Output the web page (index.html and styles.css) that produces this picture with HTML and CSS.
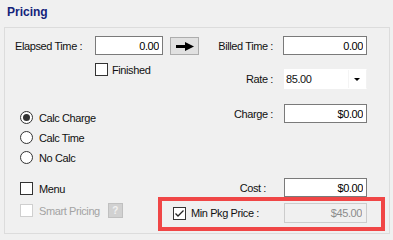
FILE: index.html
```html
<!DOCTYPE html>
<html lang="en">
<head>
  <meta charset="UTF-8" />
  <title>Pricing</title>
  <link rel="stylesheet" href="styles.css">
</head>
<body>
  <div class="panel">
    <div class="title">Pricing</div>
    <div class="group">
      <div class="cols">
        <div class="left">
          <div class="row">
            <span class="lbl-l">Elapsed Time :</span>
            <input class="num" type="text" value="0.00" />
            <button class="go">
              <svg width="18" height="9" viewBox="0 0 18 9"><rect x="0" y="3" width="11" height="3" fill="#000"/><polygon points="9,0 18,4.5 9,9" fill="#000"/></svg>
            </button>
          </div>
          <div class="check finished"><span class="box"></span>Finished</div>
          <div class="radios">
            <div class="radio on"><span class="ring"></span>Calc Charge</div>
            <div class="radio"><span class="ring"></span>Calc Time</div>
            <div class="radio"><span class="ring"></span>No Calc</div>
          </div>
          <div class="check menu"><span class="box"></span>Menu</div>
        </div>
        <div class="right">
          <div class="row">
            <span class="lbl">Billed Time :</span>
            <input class="num wide" type="text" value="0.00" />
          </div>
          <div class="row rate">
            <span class="lbl">Rate :</span>
            <div class="select"><span>85.00</span><span class="caret"></span></div>
          </div>
          <div class="row charge">
            <span class="lbl">Charge :</span>
            <input class="num" type="text" value="$0.00" />
          </div>
          <div class="row cost">
            <span class="lbl cost-lbl">Cost :</span>
            <input class="num" type="text" value="$0.00" />
          </div>
        </div>
      </div>
      <div class="last">
        <div class="check smart"><span class="box"></span>Smart Pricing<span class="help">?</span></div>
        <div class="highlight">
          <span class="box checked">
            <svg width="11" height="11" viewBox="0 0 11 11"><polyline points="1.5,5.5 4,8 9.5,2.5" fill="none" stroke="#222" stroke-width="1.3"/></svg>
          </span>
          <span class="mp-lbl">Min Pkg Price :</span>
          <input class="num off" type="text" value="$45.00" disabled />
        </div>
      </div>
    </div>
  </div>
</body>
</html>
```

FILE: styles.css
```css
body {
  margin: 0;
  background: #f0f0f0;
  font-family: "Liberation Sans", Arial, sans-serif;
  font-size: 11px;
  letter-spacing: -0.4px;
  color: #111;
}
.panel {
  width: 393px;
  height: 240px;
}
.title {
  height: 27px;
  box-sizing: border-box;
  padding: 5px 0 0 7px;
  line-height: 15px;
  font-size: 12px;
  letter-spacing: 0;
  font-weight: bold;
  color: #14237a;
}
.group {
  margin: 0 3px 0 4px;
  border: 1px solid #dcdcdc;
  padding: 8px 0 2px 10px;
}
.cols {
  display: flex;
  align-items: flex-start;
}
.left {
  width: 195px;
}
.row {
  display: flex;
  align-items: center;
  height: 19px;
  white-space: nowrap;
}
.lbl-l {
  width: 80px;
}
.lbl {
  width: 63px;
  text-align: right;
  margin-right: 11px;
}
.cost-lbl {
  padding-right: 7px;
  box-sizing: border-box;
}
input.num {
  width: 83px;
  height: 19px;
  box-sizing: border-box;
  border: 1px solid #7a7a7a;
  background: #fff;
  padding: 0 3px 0 0;
  margin: 0;
  font: inherit;
  letter-spacing: inherit;
  color: #000;
  text-align: right;
}
.left input.num {
  width: 68px;
}
.right .row:first-child .lbl {
  margin-right: 10px;
}
input.num.wide {
  width: 84px;
}
.go {
  width: 29px;
  height: 18px;
  margin: 1px 0 0 7px;
  padding: 0;
  background: #e1e1e1;
  border: 1px solid #adadad;
  display: flex;
  align-items: center;
  justify-content: center;
}
.check, .radio {
  display: flex;
  align-items: center;
  height: 13px;
  white-space: nowrap;
}
.box {
  width: 13px;
  height: 13px;
  box-sizing: border-box;
  border: 1px solid #333;
  background: #fff;
  margin-right: 5px;
  flex: none;
}
.finished {
  margin: 8px 0 0 80px;
}
.finished .box {
  margin-right: 4px;
}
.radios {
  margin: 35px 0 0 5px;
}
.radio + .radio {
  margin-top: 7px;
}
.ring {
  width: 13px;
  height: 13px;
  box-sizing: border-box;
  border: 1px solid #333;
  border-radius: 50%;
  background: #fff;
  margin-right: 6px;
  display: flex;
  align-items: center;
  justify-content: center;
}
.radio.on .ring::after {
  content: "";
  width: 7px;
  height: 7px;
  border-radius: 50%;
  background: #333;
}
.menu {
  margin: 18px 0 0 5px;
}
.menu .box, .smart .box {
  margin-right: 6px;
}
.rate {
  margin-top: 14px;
  height: 20px;
}
.select {
  width: 83px;
  height: 20px;
  background: #fff;
  display: flex;
  align-items: center;
  justify-content: space-between;
  padding-left: 1px;
  box-sizing: border-box;
  border: 1px solid #fff;
  border-right-color: #f2f2f2;
}
.caret {
  width: 17px;
  height: 18px;
  border-left: 1px solid #f4f4f4;
  position: relative;
}
.caret::after {
  content: "";
  position: absolute;
  left: 5px;
  top: 8px;
  border-left: 3px solid transparent;
  border-right: 3px solid transparent;
  border-top: 3px solid #000;
}
.charge {
  margin-top: 15px;
}
.cost {
  margin-top: 55px;
}
.last {
  display: flex;
  align-items: flex-start;
}
.smart {
  width: 143px;
  box-sizing: border-box;
  margin-top: 7px;
  padding-left: 5px;
  color: #a3a3a3;
}
.smart .box {
  border-color: #cfcfcf;
}
.help {
  width: 15px;
  height: 15px;
  box-sizing: border-box;
  margin-left: 8px;
  background: #d1d1d1;
  border: 1px solid #c0c0c0;
  color: #f2f2f2;
  font-weight: bold;
  font-size: 10px;
  letter-spacing: 0;
  display: flex;
  align-items: center;
  justify-content: center;
}
.highlight {
  width: 227px;
  height: 34px;
  box-sizing: border-box;
  border: 4px solid #f04646;
  padding: 2px 14px 4px 11px;
  display: flex;
  align-items: center;
  white-space: nowrap;
}
.highlight .box {
  display: flex;
  align-items: center;
  justify-content: center;
}
.mp-lbl {
  flex: 1;
}
input.num.off {
  width: 83px;
  height: 20px;
  background: #f0f0f0;
  border-color: #cccccc;
  color: #8c8c8c;
  padding-right: 4px;
}
```
